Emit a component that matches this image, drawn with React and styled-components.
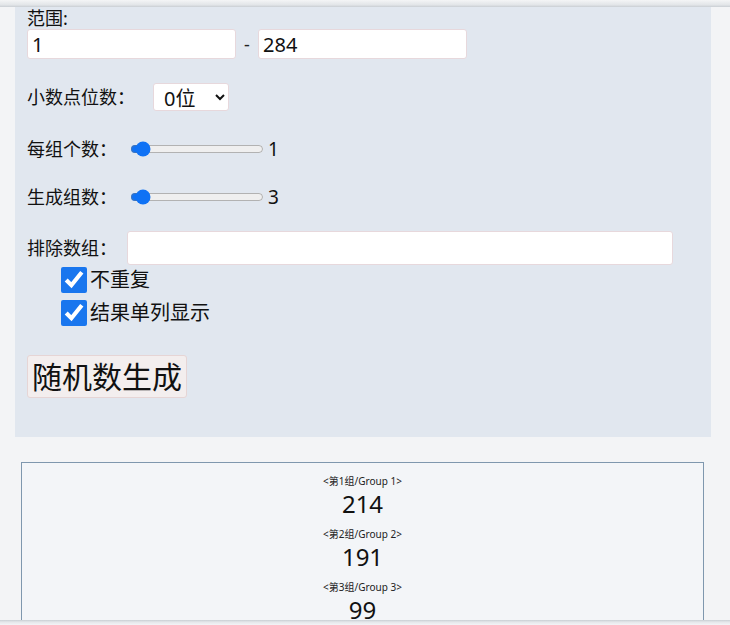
import React from 'react';
import styled, { createGlobalStyle } from 'styled-components';

const GlobalStyle = createGlobalStyle`
  body {
    margin: 0;
    background: #f3f4f6;
    font-family: "Noto Sans", "Noto Sans CJK SC", sans-serif;
    color: #111;
    overflow: hidden;
  }
`;

const TopShade = styled.div`
  position: fixed;
  top: 0;
  left: 0;
  right: 0;
  height: 7px;
  background: linear-gradient(#f4f5f6, #e2e5e8 70%, #c9ced3);
  z-index: 5;
`;

const BottomShade = styled.div`
  position: fixed;
  bottom: 0;
  left: 0;
  right: 0;
  height: 5px;
  background: linear-gradient(#c9ced3, #e4e7ea 40%, #f3f4f6);
  z-index: 5;
`;

const Page = styled.div`
  width: 696px;
  padding-left: 15px;
`;

const Panel = styled.div`
  background: #e1e7ef;
  padding: 7px 12px 0 12px;
  height: 430px;
`;

const Label = styled.div`
  font-size: 18px;
  line-height: 22px;
  white-space: nowrap;
`;

const RangeRow = styled.div`
  display: flex;
  align-items: center;
  height: 30px;
  margin-bottom: 24px;
`;

const TextBox = styled.input`
  box-sizing: border-box;
  width: ${p => p.$w}px;
  height: ${p => p.$h || 30}px;
  margin-left: ${p => p.$ml || 0}px;
  border: 1px solid #e7d8dc;
  border-radius: 3px;
  background: #fff;
  font: inherit;
  font-size: 20px;
  padding: 0 4px;
  color: #111;
  outline: none;
`;

const Dash = styled.span`
  font-size: 18px;
  width: 22px;
  text-align: center;
  color: #222;
`;

const Row = styled.div`
  display: flex;
  align-items: center;
  height: ${p => p.$h}px;
  margin-bottom: ${p => p.$mb || 0}px;
`;

const Select = styled.select`
  margin-left: 18px;
  width: 76px;
  height: 28px;
  border: 1px solid #e7d8dc;
  border-radius: 3px;
  background: #fff;
  font: inherit;
  font-size: 20px;
  color: #111;
  padding: 0 4px 0 6px;
`;

const Slider = styled.input`
  width: 134px;
  margin: 0 4px 0 13px;
  accent-color: #0f72f5;
`;

const Value = styled.span`
  font-size: 19px;
`;

const CheckRow = styled.label`
  display: flex;
  align-items: center;
  height: 26px;
  margin-left: 34px;
  margin-bottom: ${p => p.$mb || 0}px;
  font-size: 20px;
  line-height: 26px;
`;

const Check = styled.input`
  width: 26px;
  height: 26px;
  margin: 0 3px 0 0;
  accent-color: #1976ee;
`;

const GenButton = styled.button`
  height: 43px;
  padding: 0 4px;
  border: 1px solid #e6d5d5;
  border-radius: 3px;
  background: #f3eeee;
  font: inherit;
  font-size: 30px;
  line-height: 41px;
  color: #111;
`;

const Results = styled.div`
  margin: 25px 7px 0 6px;
  border: 1px solid #7f97ae;
  background: #f3f5f8;
  padding-top: 11px;
  text-align: center;
  height: 150px;
  overflow: hidden;
`;

const Group = styled.div`
  margin-bottom: 7px;
`;

const GroupTitle = styled.div`
  font-size: 10px;
  line-height: 14px;
  color: #222;
`;

const Num = styled.div`
  font-size: 24px;
  line-height: 32px;
  color: #111;
`;

const groups = [214, 191, 99];

export default function App() {
  return (
    <>
      <GlobalStyle />
      <TopShade />
      <Page>
        <Panel>
          <Label>范围:</Label>
          <RangeRow>
            <TextBox $w={209} defaultValue="1" />
            <Dash>-</Dash>
            <TextBox $w={209} defaultValue="284" />
          </RangeRow>
          <Row $h={28} $mb={25}>
            <Label>小数点位数：</Label>
            <Select defaultValue="0">
              <option value="0">0位</option>
              <option value="1">1位</option>
              <option value="2">2位</option>
            </Select>
          </Row>
          <Row $h={26} $mb={22}>
            <Label>每组个数：</Label>
            <Slider type="range" min="0" max="24" defaultValue="1" />
            <Value>1</Value>
          </Row>
          <Row $h={26} $mb={21}>
            <Label>生成组数：</Label>
            <Slider type="range" min="0" max="72" defaultValue="3" />
            <Value>3</Value>
          </Row>
          <Row $h={34} $mb={2}>
            <Label>排除数组：</Label>
            <TextBox $w={546} $h={34} $ml={10} />
          </Row>
          <CheckRow $mb={7}>
            <Check type="checkbox" defaultChecked />
            不重复
          </CheckRow>
          <CheckRow $mb={29}>
            <Check type="checkbox" defaultChecked />
            结果单列显示
          </CheckRow>
          <GenButton>随机数生成</GenButton>
        </Panel>
        <Results>
          {groups.map((n, i) => (
            <Group key={i}>
              <GroupTitle>{`<第${i + 1}组/Group ${i + 1}>`}</GroupTitle>
              <Num>{n}</Num>
            </Group>
          ))}
        </Results>
      </Page>
      <BottomShade />
    </>
  );
}
